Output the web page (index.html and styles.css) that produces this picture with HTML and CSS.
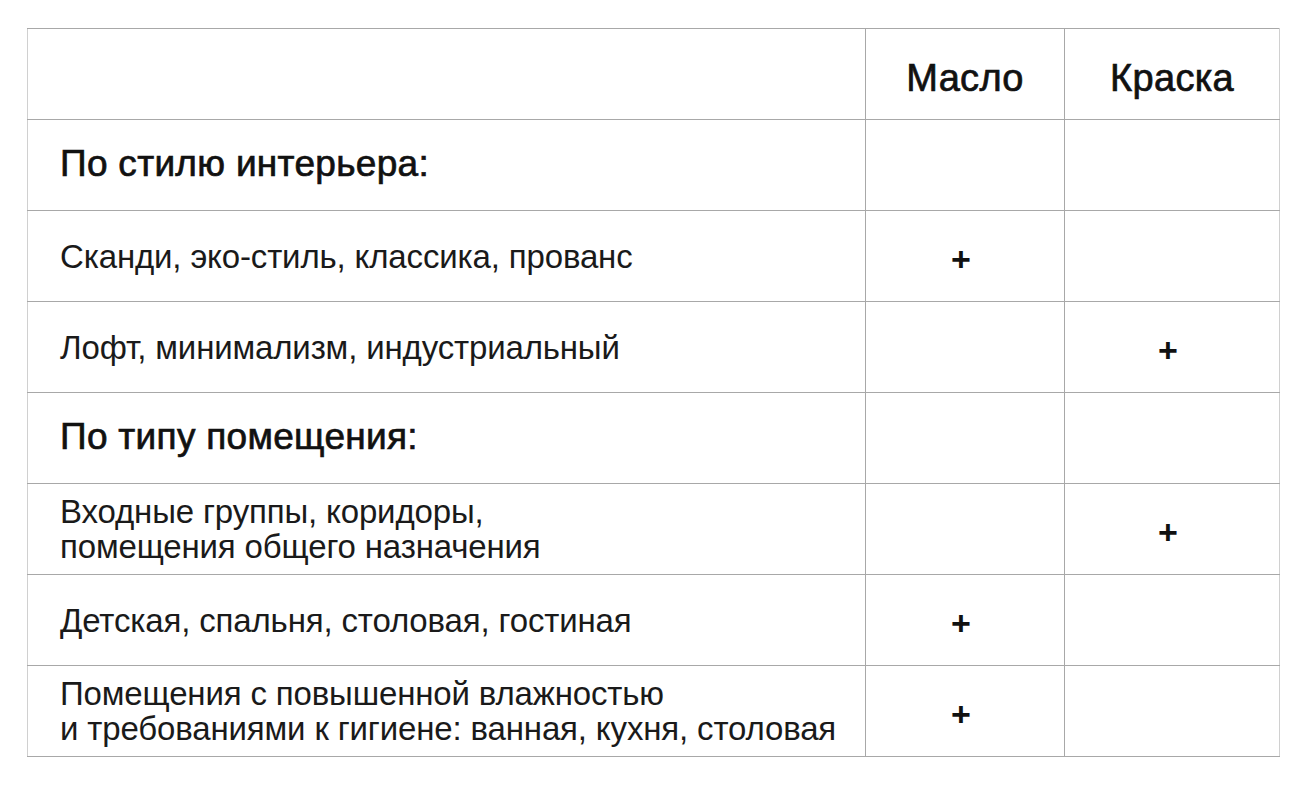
FILE: index.html
```html
<!DOCTYPE html>
<html lang="ru">
<head>
<meta charset="utf-8">
<title>Масло или краска</title>
<link rel="stylesheet" href="styles.css">
</head>
<body>
<table class="compare">
  <colgroup>
    <col class="col-label">
    <col class="col-oil">
    <col class="col-paint">
  </colgroup>
  <thead>
    <tr>
      <th class="label"></th>
      <th class="head">Масло</th>
      <th class="head">Краска</th>
    </tr>
  </thead>
  <tbody>
    <tr>
      <td class="label section">По стилю интерьера:</td>
      <td class="mark"></td>
      <td class="mark"></td>
    </tr>
    <tr>
      <td class="label">Сканди, эко-стиль, классика, прованс</td>
      <td class="mark">+</td>
      <td class="mark"></td>
    </tr>
    <tr>
      <td class="label">Лофт, минимализм, индустриальный</td>
      <td class="mark"></td>
      <td class="mark">+</td>
    </tr>
    <tr>
      <td class="label section">По типу помещения:</td>
      <td class="mark"></td>
      <td class="mark"></td>
    </tr>
    <tr>
      <td class="label">Входные группы, коридоры,<br>помещения общего назначения</td>
      <td class="mark"></td>
      <td class="mark">+</td>
    </tr>
    <tr>
      <td class="label">Детская, спальня, столовая, гостиная</td>
      <td class="mark">+</td>
      <td class="mark"></td>
    </tr>
    <tr>
      <td class="label">Помещения с повышенной влажностью<br>и требованиями к гигиене: ванная, кухня, столовая</td>
      <td class="mark">+</td>
      <td class="mark"></td>
    </tr>
  </tbody>
</table>
</body>
</html>
```

FILE: styles.css
```css
html, body {
  margin: 0;
  padding: 0;
  background: #ffffff;
}

body {
  padding: 28px 0 0 27px;
  font-family: "Liberation Sans", Arial, sans-serif;
  color: #111111;
}

.compare {
  border-collapse: collapse;
  table-layout: fixed;
  width: 1252px;
}

.col-label { width: 838px; }
.col-oil { width: 199px; }
.col-paint { width: 215px; }

.compare th,
.compare td {
  border: 1px solid #a8a8a8;
  height: 91px;
  padding: 0;
  vertical-align: middle;
  box-sizing: border-box;
}

.compare tr > :first-child {
  border-left-color: #d0d0d0;
}

.compare tr > :last-child {
  border-right-color: #d0d0d0;
}

.compare .head {
  font-size: 38px;
  font-weight: 400;
  text-align: center;
  -webkit-text-stroke: 0.7px #111;
  padding-top: 8px;
  letter-spacing: 0.3px;
}

.compare .label {
  padding-left: 32px;
  font-size: 33px;
  line-height: 35px;
  text-align: left;
  font-weight: 400;
  letter-spacing: -0.15px;
  color: #1a1a1a;
}

.compare .section {
  font-size: 37px;
  -webkit-text-stroke: 0.7px #111;
  letter-spacing: 0.3px;
  color: #111111;
  padding-bottom: 4px;
}

.compare .mark {
  text-align: center;
  font-size: 34px;
  font-weight: 700;
  padding-top: 6px;
  padding-right: 8px;
}
```
